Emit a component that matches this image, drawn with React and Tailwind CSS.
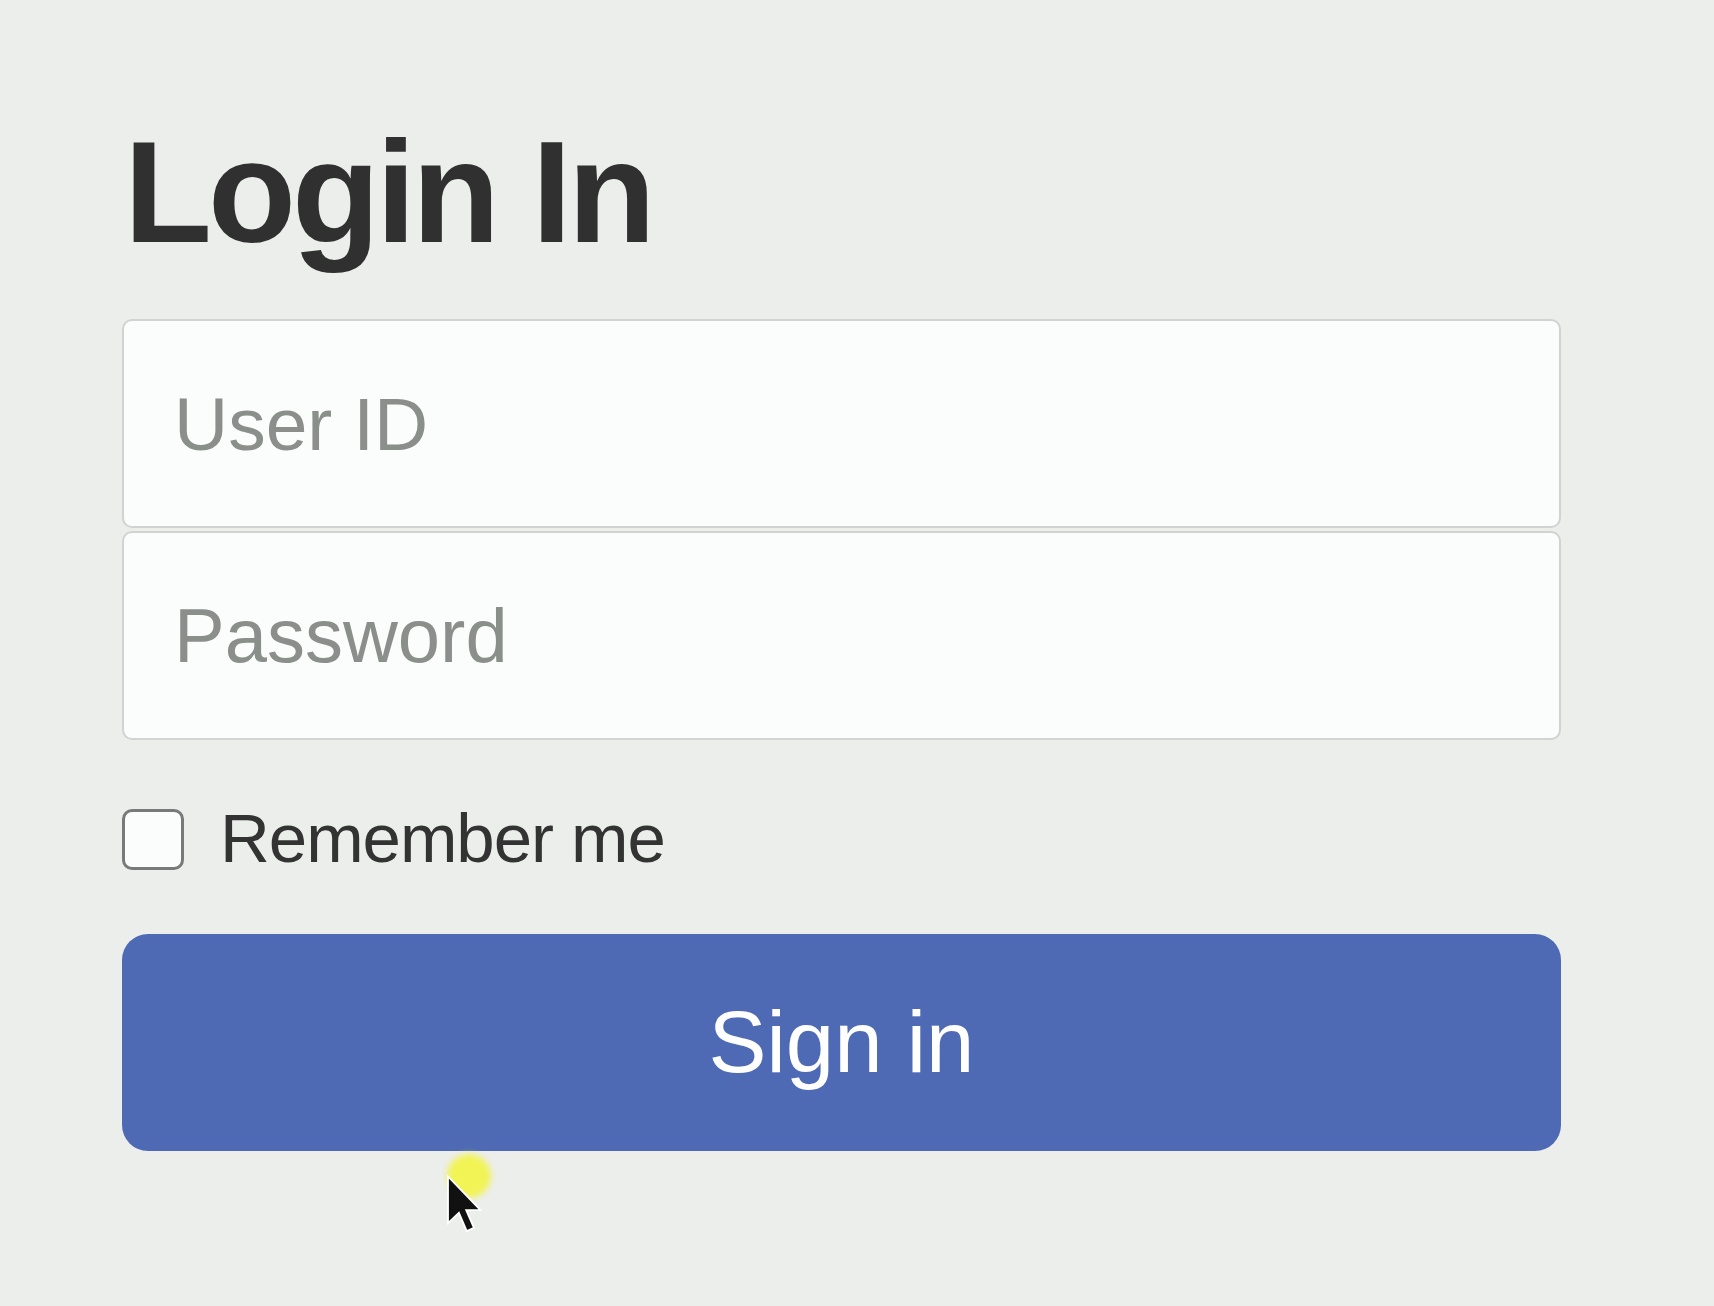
import React from 'react';

function Cursor() {
  return (
    <div className="pointer-events-none absolute left-[435px] top-[1166px]">
      <div className="absolute left-[12px] top-[-12px] h-[44px] w-[44px] rounded-full bg-[#f2f43a]/85 blur-[3px]" />
      <svg className="relative" width="52" height="78" viewBox="0 0 20 30">
        <path d="M5 4 L5 22 L9.2 18 L12.2 25 L15 23.8 L12 17 L17.5 17 Z" fill="#111" stroke="#fff" strokeWidth="0.7" />
      </svg>
    </div>
  );
}

export default function App() {
  return (
    <div className="relative min-h-screen bg-[#eceeec] font-['Liberation_Sans',Arial,sans-serif]">
      <div className="box-content flex w-[1439px] flex-col pl-[122px] pt-[121px]">
        <h1 className="ml-[2px] text-[144px] font-bold leading-none tracking-[-4px] text-[#2f302f]">Login In</h1>

        <div className="mt-[54px] flex flex-col gap-[3px]">
          <input
            type="text"
            placeholder="User ID"
            className="h-[209px] w-full rounded-[10px] border-2 border-[#d0d3d1] bg-[#fbfdfc] px-[50px] text-[75px] text-[#333] outline-none placeholder:text-[#8b8f8c]"
          />
          <input
            type="password"
            placeholder="Password"
            className="h-[209px] w-full rounded-[10px] border-2 border-[#d0d3d1] bg-[#fbfdfc] px-[50px] text-[76px] text-[#333] outline-none placeholder:text-[#8b8f8c]"
          />
        </div>

        <label className="mt-[66px] flex items-center gap-[36px]">
          <input
            type="checkbox"
            className="h-[61px] w-[62px] appearance-none rounded-[10px] border-[3px] border-[#777a78] bg-[#fbfdfc]"
          />
          <span className="-mt-[2px] text-[69px] leading-none tracking-[-0.015em] text-[#323332]">Remember me</span>
        </label>

        <button
          type="button"
          className="mt-[61px] h-[217px] w-full rounded-[26px] bg-[#4f6ab4] text-[87px] text-white"
        >
          Sign in
        </button>
      </div>
      <Cursor />
    </div>
  );
}
